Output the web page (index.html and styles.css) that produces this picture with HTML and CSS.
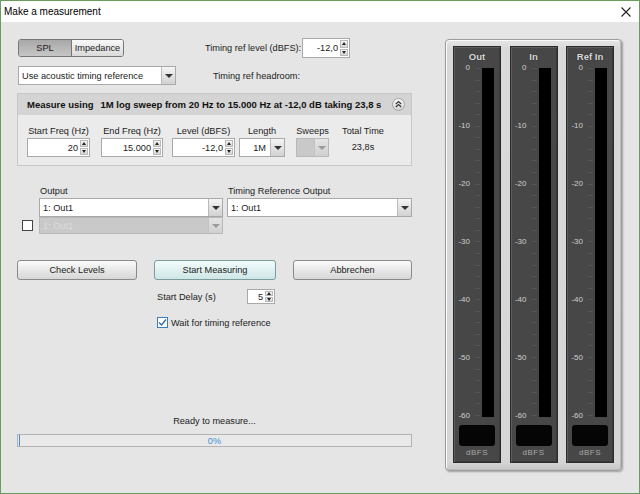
FILE: index.html
```html
<!DOCTYPE html>
<html>
<head>
<meta charset="utf-8">
<title>Make a measurement</title>
<link rel="stylesheet" href="styles.css">
</head>
<body>
<div class="window">
  <div class="titlebar">
    <span class="title">Make a measurement</span>
    <svg class="close" width="10" height="10" viewBox="0 0 10 10"><path d="M0.5 0.5 L9.5 9.5 M9.5 0.5 L0.5 9.5" stroke="#222" stroke-width="1.1" fill="none"/></svg>
  </div>
  <div class="client">
    <div class="left">
      <div class="row1">
        <div class="toggle"><span class="seg on">SPL</span><span class="seg off">Impedance</span></div>
        <span class="trl">Timing ref level (dBFS):</span>
        <div class="spin w48"><span class="val">-12,0</span><span class="arrows"><i class="up"></i><i class="dn"></i></span></div>
      </div>
      <div class="row2">
        <div class="combo w158"><span class="txt">Use acoustic timing reference</span><span class="cbtn"></span></div>
        <span class="headroom">Timing ref headroom:</span>
      </div>
      <div class="panel">
        <div class="panel-head">
          <span>Measure using</span><span class="desc">1M log sweep from 20 Hz to 15.000 Hz at -12,0 dB taking 23,8 s</span>
          <svg class="collapse" width="13" height="13" viewBox="0 0 13 13">
            <defs><linearGradient id="cg" x1="0" y1="0" x2="0" y2="1"><stop offset="0" stop-color="#fafafa"/><stop offset="1" stop-color="#d2d2d2"/></linearGradient></defs>
            <circle cx="6.5" cy="6.5" r="6" fill="url(#cg)" stroke="#a2a2a2"/>
            <path d="M3.8 6 L6.5 3.5 L9.2 6 M3.8 9 L6.5 6.5 L9.2 9" stroke="#333" stroke-width="1.1" fill="none"/>
          </svg>
        </div>
        <div class="panel-body">
          <div class="field f1"><span class="flbl">Start Freq (Hz)</span><div class="spin fs"><span class="val">20</span><span class="arrows"><i class="up"></i><i class="dn"></i></span></div></div>
          <div class="field f2"><span class="flbl">End Freq (Hz)</span><div class="spin fs"><span class="val">15.000</span><span class="arrows"><i class="up"></i><i class="dn"></i></span></div></div>
          <div class="field f3"><span class="flbl">Level (dBFS)</span><div class="spin fs"><span class="val">-12,0</span><span class="arrows"><i class="up"></i><i class="dn"></i></span></div></div>
          <div class="field f4"><span class="flbl">Length</span><div class="combo fs"><span class="txt right">1M</span><span class="cbtn"></span></div></div>
          <div class="field f5"><span class="flbl">Sweeps</span><div class="combo fs disabled"><span class="txt"></span><span class="cbtn"></span></div></div>
          <div class="field f6"><span class="flbl">Total Time</span><span class="ttime">23,8s</span></div>
        </div>
      </div>
      <div class="outputs">
        <span></span><span class="olbl">Output</span><span></span><span class="olbl">Timing Reference Output</span>
        <span></span><div class="combo oc"><span class="txt">1: Out1</span><span class="cbtn"></span></div><span></span><div class="combo oc"><span class="txt">1: Out1</span><span class="cbtn"></span></div>
        <span class="cb"></span><div class="combo oc2 disabled"><span class="txt">1: Out1</span><span class="cbtn"></span></div>
      </div>
      <div class="buttons">
        <div class="btn b1">Check Levels</div>
        <div class="btn b2">Start Measuring</div>
        <div class="btn b3">Abbrechen</div>
      </div>
      <div class="delay">
        <span class="dlbl">Start Delay (s)</span>
        <div class="spin ds"><span class="val">5</span><span class="arrows"><i class="up"></i><i class="dn"></i></span></div>
      </div>
      <div class="wait">
        <span class="cb checked"><svg width="9" height="9" viewBox="0 0 9 9"><path d="M1 4.5 L3.5 7 L8 1.5" stroke="#2a6aa8" stroke-width="1.3" fill="none"/></svg></span>
        <span>Wait for timing reference</span>
      </div>
      <div class="bottom">
        <div class="status">Ready to measure...</div>
        <div class="progress"><span class="pfill"></span><span class="ptxt">0%</span></div>
      </div>
    </div>
    <div class="meters">
      <div class="col">
        <div class="col-h">Out</div>
        <div class="scale">
          <div class="nums"><span>0</span><span>-10</span><span>-20</span><span>-30</span><span>-40</span><span>-50</span><span>-60</span></div>
          <div class="ticks"></div>
          <div class="bar"></div>
        </div>
        <div class="readout"></div>
        <div class="unit">dBFS</div>
      </div>
      <div class="col">
        <div class="col-h">In</div>
        <div class="scale">
          <div class="nums"><span>0</span><span>-10</span><span>-20</span><span>-30</span><span>-40</span><span>-50</span><span>-60</span></div>
          <div class="ticks"></div>
          <div class="bar"></div>
        </div>
        <div class="readout"></div>
        <div class="unit">dBFS</div>
      </div>
      <div class="col">
        <div class="col-h">Ref In</div>
        <div class="scale">
          <div class="nums"><span>0</span><span>-10</span><span>-20</span><span>-30</span><span>-40</span><span>-50</span><span>-60</span></div>
          <div class="ticks"></div>
          <div class="bar"></div>
        </div>
        <div class="readout"></div>
        <div class="unit">dBFS</div>
      </div>
    </div>
  </div>
</div>
</body>
</html>
```
FILE: styles.css
```css
* { box-sizing: border-box; }
html, body { margin: 0; padding: 0; }
body {
  width: 640px; height: 494px;
  font-family: "Liberation Sans", Arial, sans-serif;
  font-size: 9.2px; color: #1b1b1b;
  background: #e5e5e5;
}
.window {
  width: 640px; height: 494px;
  border: 1px solid #6a9e5e;
  display: flex; flex-direction: column;
  background: #e5e5e5;
}
.titlebar {
  height: 21px; flex: none;
  background: #fff;
  display: flex; align-items: center; justify-content: space-between;
  padding: 0 8px 0 3px;
}
.title { font-size: 10px; color: #000; }
.close { display: block; }
.client { flex: 1; display: flex; padding: 16px 17px 0 16px; }
.left { width: 395px; display: flex; flex-direction: column; padding-bottom: 46px; }

/* row 1 */
.row1 { display: flex; align-items: center; height: 20px; }
.toggle {
  margin-left: 1px; width: 106px; height: 18px;
  display: flex; border: 1px solid #777; border-radius: 3px; overflow: hidden;
}
.seg { display: flex; align-items: center; justify-content: center; }
.seg.on { width: 53px; background: linear-gradient(#a8a8a8, #c6c6c6); border-right: 1px solid #777; }
.seg.off { flex: 1; background: linear-gradient(#f8f8f8, #dadada); }
.trl { margin-left: 81px; width: 97px; white-space: nowrap; }

/* spinner */
.spin { display: flex; height: 19px; border: 1px solid #a9a9a9; background: #fff; }
.spin .val { flex: 1; text-align: right; padding-right: 2px; align-self: center; }
.arrows { width: 9px; display: flex; flex-direction: column; padding: 1px 1px 1px 0; gap: 1px; }
.arrows i {
  flex: 1; background: linear-gradient(#f7f7f7, #d6d6d6);
  border: 1px solid #b9b9b9;
  display: flex; align-items: center; justify-content: center;
}
.arrows i::before { content: ""; border-left: 2.5px solid transparent; border-right: 2.5px solid transparent; }
.arrows .up::before { border-bottom: 3px solid #222; }
.arrows .dn::before { border-top: 3px solid #222; }
.w48 { width: 48px; height: 20px; }

/* combo */
.combo { display: flex; height: 19px; border: 1px solid #a9a9a9; background: #fff; }
.combo .txt { flex: 1; padding-left: 3px; align-self: center; white-space: nowrap; overflow: hidden; }
.combo .txt.right { text-align: right; padding-right: 4px; }
.cbtn {
  width: 14px; border-left: 1px solid #b9b9b9;
  background: linear-gradient(#f5f5f5, #d2d2d2);
  display: flex; align-items: center; justify-content: center;
}
.cbtn::before { content: ""; border-left: 4px solid transparent; border-right: 4px solid transparent; border-top: 4px solid #333; }
.combo.disabled { background: #c9c9c9; border-color: #b8b8b8; color: #dcdcdc; }
.combo.disabled .cbtn { background: linear-gradient(#e4e4e4, #d0d0d0); border-left-color: #c4c4c4; }
.combo.disabled .cbtn::before { border-top-color: #9a9a9a; }
.w158 { width: 158px; margin-left: 1px; }

.row2 { display: flex; align-items: center; margin-top: 8px; }
.headroom { margin-left: 37px; }

/* panel */
.panel { margin-top: 8px; border: 1px solid #c7c7c7; background: #ebebeb; }
.panel-head {
  height: 21px; background: #d4d4d4;
  display: flex; align-items: center;
  padding: 0 6px 0 9px; font-weight: bold; color: #111; font-size: 9.5px;
}
.panel-head .desc { margin-left: 7px; flex: 1; }
.collapse { display: block; }
.panel-body { display: flex; padding: 10px 0 8px 9px; }
.field { display: flex; flex-direction: column; align-items: center; }
.flbl { line-height: 12px; height: 12px; white-space: nowrap; }
.fs { margin-top: 1px; width: 100%; }
.f1 { width: 63px; }
.f2 { width: 62px; margin-left: 11px; }
.f3 { width: 63px; margin-left: 9px; }
.f4 { width: 46px; margin-left: 4px; }
.f5 { width: 33px; margin-left: 11px; }
.f6 { width: 40px; margin-left: 14px; }
.ttime { margin-top: 1px; height: 19px; line-height: 19px; }

/* outputs */
.outputs {
  margin-top: 19px;
  display: grid;
  grid-template-columns: 22px 184px 4px 185px;
  align-items: center;
}
.olbl { height: 13px; line-height: 12px; padding-left: 1px; }
.oc { height: 19px; }
.oc2 { height: 17px; }
.cb {
  width: 11px; height: 11px; margin-left: 5px;
  border: 1px solid #444; background: #fff;
  display: flex; align-items: center; justify-content: center;
}
.cb.checked { border-color: #3b7db5; margin-left: 0; }
.cb svg { display: block; }

/* buttons */
.buttons { margin-top: 26px; display: flex; justify-content: space-between; }
.btn {
  height: 20px; border: 1px solid #8a8a8a; border-radius: 3px;
  background: linear-gradient(#fbfbfb, #e8e8e8 50%, #d7d7d7);
  display: flex; align-items: center; justify-content: center;
}
.b1 { width: 120px; }
.b2 { width: 122px; background: linear-gradient(#f2fbfb, #e0f1f1 50%, #cfe6e6); border-color: #7c9c9c; }
.b3 { width: 119px; }

.delay { margin-top: 9px; margin-left: 140px; display: flex; align-items: center; }
.dlbl { width: 90px; }
.ds { width: 28px; height: 15px; }
.wait { margin-top: 13px; margin-left: 140px; display: flex; align-items: center; gap: 3px; }

.bottom { margin-top: auto; }
.status { text-align: center; line-height: 12px; }
.progress {
  margin-top: 7px; height: 13px;
  border: 1px solid #b3b3b3; background: #e9e9e9;
  display: flex; align-items: center; position: relative;
}
.pfill { width: 1px; margin-left: 1px; height: 100%; background: #3d8fd6; }
.ptxt { flex: 1; text-align: center; color: #3d8fd6; margin-right: 2px; }

/* meters */
.meters {
  width: 177px; height: 432px; margin-top: 1px; margin-left: 33px;
  display: flex; gap: 8.5px;
  padding: 6px 7px 7px 7px;
  border: 1px solid #9d9d9d; border-radius: 4px;
  background: linear-gradient(#e6e6e6, #d9d9d9 2%, #d6d6d6 98%, #c8c8c8);
  box-shadow: inset 1px 1px 0 #fafafa, inset -1px -1px 0 #bcbcbc, 1px 1px 2px rgba(0,0,0,.3);
}
.col {
  flex: 1; display: flex; flex-direction: column;
  background: #474747;
  border: 1px solid #2b2b2b;
  box-shadow: inset 1px 1px 0 #5d5d5d, inset -1px -1px 0 #3a3a3a;
}
.col-h {
  height: 16px; padding-top: 5px; line-height: 10px;
  text-align: center; font-weight: bold; font-size: 9.5px;
  color: #dcdcdc; text-shadow: 0 0 1px #111;
}
.scale { flex: 1; display: flex; }
.nums {
  width: 13px; margin-left: 3px;
  display: flex; flex-direction: column; justify-content: space-between;
  text-align: right; font-size: 8px; line-height: 10px; color: #cfcfcf;
}
.ticks {
  flex: 1; margin: 5px 2px 4px 2px;
  background: repeating-linear-gradient(to bottom, #565656 0 1px, transparent 1px 11.56px);
  background-size: 5px 100%; background-repeat: no-repeat; background-position: right top;
}
.bar { width: 12px; margin: 5px 6px 4px 0; background: #000; }
.readout { height: 21px; margin: 4px 5px 0 5px; background: #050505; border-radius: 3px; }
.unit { margin: 2px 0 4px; line-height: 10px; text-align: center; font-size: 8px; color: #a9a9a9; letter-spacing: 0.5px; }
```
